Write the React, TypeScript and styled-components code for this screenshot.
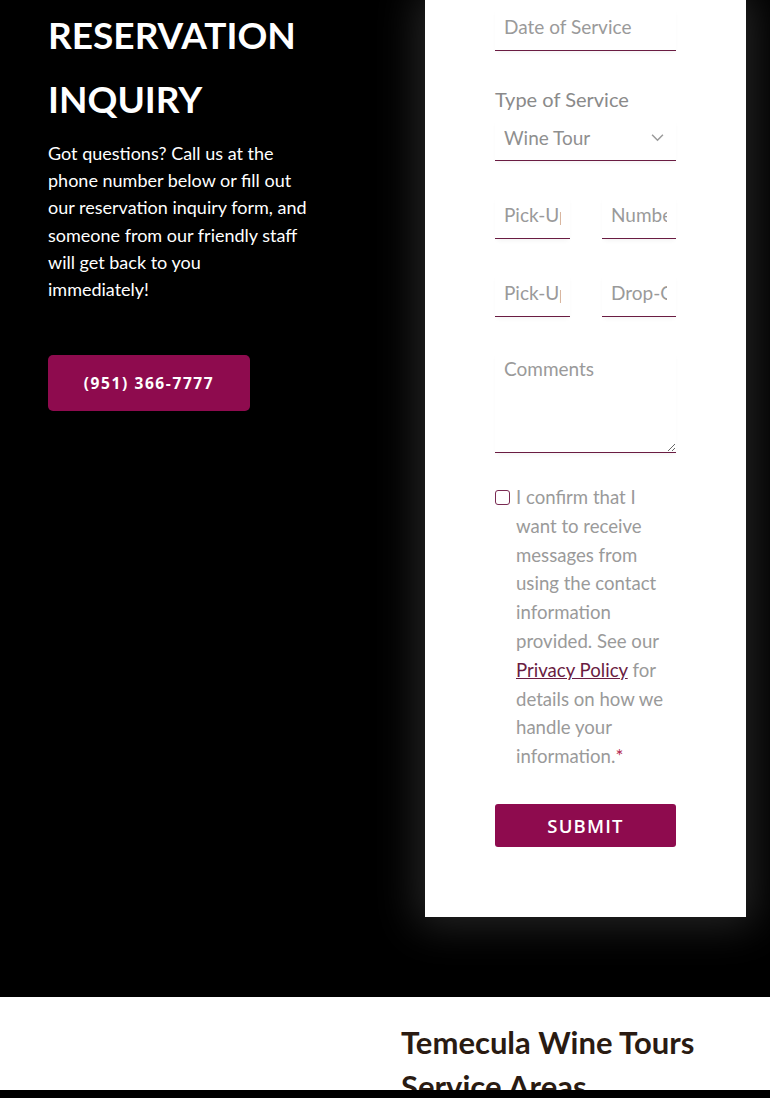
import styled, { createGlobalStyle } from 'styled-components'

const GlobalStyle = createGlobalStyle`
  html, body {
    margin: 0;
    padding: 0;
    background: #ffffff;
  }
  body {
    font-family: Lato, "Liberation Sans", sans-serif;
  }
  * {
    box-sizing: border-box;
  }
`

const WINE = '#8e0b4e'
const LINE = '#6a1c42'

const App = () => {
  return (
    <>
      <GlobalStyle />
      <Page>
        <Hero>
          <Intro>
            <Heading>RESERVATION INQUIRY</Heading>
            <Lead>
              Got questions? Call us at the phone number below or fill out our
              reservation inquiry form, and someone from our friendly staff
              will get back to you <br />
              immediately!
            </Lead>
            <PhoneButton href="#">(951) 366-7777</PhoneButton>
          </Intro>

          <Card>
            <Form onSubmit={e => e.preventDefault()}>
              <Field type="text" placeholder="Date of Service" />

              <Group>
                <Label htmlFor="service">Type of Service</Label>
                <SelectWrap>
                  <Select id="service" defaultValue="wine">
                    <option value="wine">Wine Tour</option>
                  </Select>
                  <Chevron viewBox="0 0 12 8" aria-hidden>
                    <path d="M1 1.5l5 5 5-5" />
                  </Chevron>
                </SelectWrap>
              </Group>

              <Pair>
                <Field type="text" placeholder="Pick-Up Time" />
                <Field type="text" placeholder="Number of Guests" />
              </Pair>

              <Pair>
                <Field type="text" placeholder="Pick-Up Location" />
                <Field type="text" placeholder="Drop-Off Location" />
              </Pair>

              <Comments placeholder="Comments" />

              <Consent>
                <Check type="checkbox" />
                <ConsentText>
                  I confirm that I want to receive messages from using the
                  contact information provided. See our{' '}
                  <PolicyLink href="#">Privacy Policy</PolicyLink> for details
                  on how we handle your information.<Required>*</Required>
                </ConsentText>
              </Consent>

              <Submit type="submit">SUBMIT</Submit>
            </Form>
          </Card>
        </Hero>

        <Areas>
          <AreasTitle>Temecula Wine Tours Service Areas</AreasTitle>
        </Areas>
      </Page>
      <BottomBar />
    </>
  )
}

export default App

const Page = styled.div`
  width: 770px;
  min-height: 1098px;
`

const Hero = styled.section`
  background: #000000;
  display: flex;
  align-items: flex-start;
  padding: 0 24px 80px 48px;
`

const Intro = styled.div`
  width: 377px;
  padding-top: 3px;
`

const Heading = styled.h1`
  margin: 0;
  width: 280px;
  color: #ffffff;
  font-family: "Lato", sans-serif;
  font-weight: 700;
  font-size: 37px;
  line-height: 64px;
`

const Lead = styled.p`
  margin: 9px 0 0;
  width: 266px;
  color: #ffffff;
  font-size: 18px;
  line-height: 27.2px;
`

const PhoneButton = styled.a`
  display: inline-flex;
  align-items: center;
  justify-content: center;
  margin-top: 52px;
  width: 202px;
  height: 56px;
  border-radius: 5px;
  background: ${WINE};
  color: #ffffff;
  font-family: "Open Sans", sans-serif;
  font-weight: 700;
  font-size: 15.5px;
  letter-spacing: 1.6px;
  text-decoration: none;
`

const Card = styled.div`
  width: 321px;
  background: #ffffff;
  padding: 8px 70px 70px;
  box-shadow: 0 0 40px 8px rgba(70, 70, 70, 0.55);
`

const Form = styled.form`
  display: flex;
  flex-direction: column;
`

const fieldBase = `
  display: block;
  width: 100%;
  border: 0;
  border-bottom: 1px solid ${LINE};
  background: #ffffff;
  color: #888888;
  font-family: Lato, sans-serif;
  font-size: 19px;
  outline: none;
  box-shadow: 0 3px 5px -2px rgba(0, 0, 0, 0.06);
  &::placeholder {
    color: #9a9a9a;
  }
`

const Field = styled.input`
  ${fieldBase}
  height: 43px;
  padding: 0 9px 5px;
`

const Group = styled.div`
  margin-top: 36px;
  display: flex;
  flex-direction: column;
  gap: 8px;
`

const Label = styled.label`
  color: #8a8a8a;
  font-size: 20px;
  line-height: 24px;
`

const SelectWrap = styled.div`
  position: relative;
`

const Select = styled.select`
  ${fieldBase}
  appearance: none;
  height: 42px;
  padding: 0 9px 5px;
  color: #8f8f8f;
`

const Chevron = styled.svg`
  position: absolute;
  right: 12px;
  top: 14px;
  width: 13px;
  height: 9px;
  fill: none;
  stroke: #9a9a9a;
  stroke-width: 1.4;
  pointer-events: none;
`

const Pair = styled.div`
  margin-top: 35px;
  display: grid;
  grid-template-columns: 75px 74px;
  justify-content: space-between;
`

const Comments = styled.textarea`
  ${fieldBase}
  margin-top: 35px;
  height: 101px;
  padding: 5px 9px;
  resize: vertical;
  line-height: 24px;
`

const Consent = styled.label`
  margin-top: 30px;
  display: flex;
  align-items: flex-start;
  gap: 6px;
`

const Check = styled.input`
  appearance: none;
  flex: none;
  margin: 7px 0 0;
  width: 15px;
  height: 15px;
  border: 1.5px solid #7a2a52;
  border-radius: 3px;
  background: #ffffff;
`

const ConsentText = styled.span`
  color: #9a9a9a;
  font-size: 18.6px;
  line-height: 28.8px;
`

const PolicyLink = styled.a`
  color: ${LINE};
  text-decoration: underline;
`

const Required = styled.span`
  color: #b3284f;
`

const Submit = styled.button`
  margin-top: 33px;
  height: 43px;
  border: 0;
  border-radius: 3px;
  background: ${WINE};
  color: #ffffff;
  font-family: "Open Sans", sans-serif;
  font-weight: 600;
  font-size: 18.5px;
  letter-spacing: 1.2px;
  cursor: pointer;
`

const Areas = styled.section`
  background: #ffffff;
  padding: 23px 24px 0 401px;
`

const AreasTitle = styled.h2`
  margin: 0;
  color: #2a1b12;
  font-family: Lato, sans-serif;
  font-weight: 700;
  font-size: 31px;
  line-height: 44px;
`

const BottomBar = styled.div`
  position: fixed;
  left: 0;
  right: 0;
  bottom: 0;
  height: 8px;
  background: #000000;
`
